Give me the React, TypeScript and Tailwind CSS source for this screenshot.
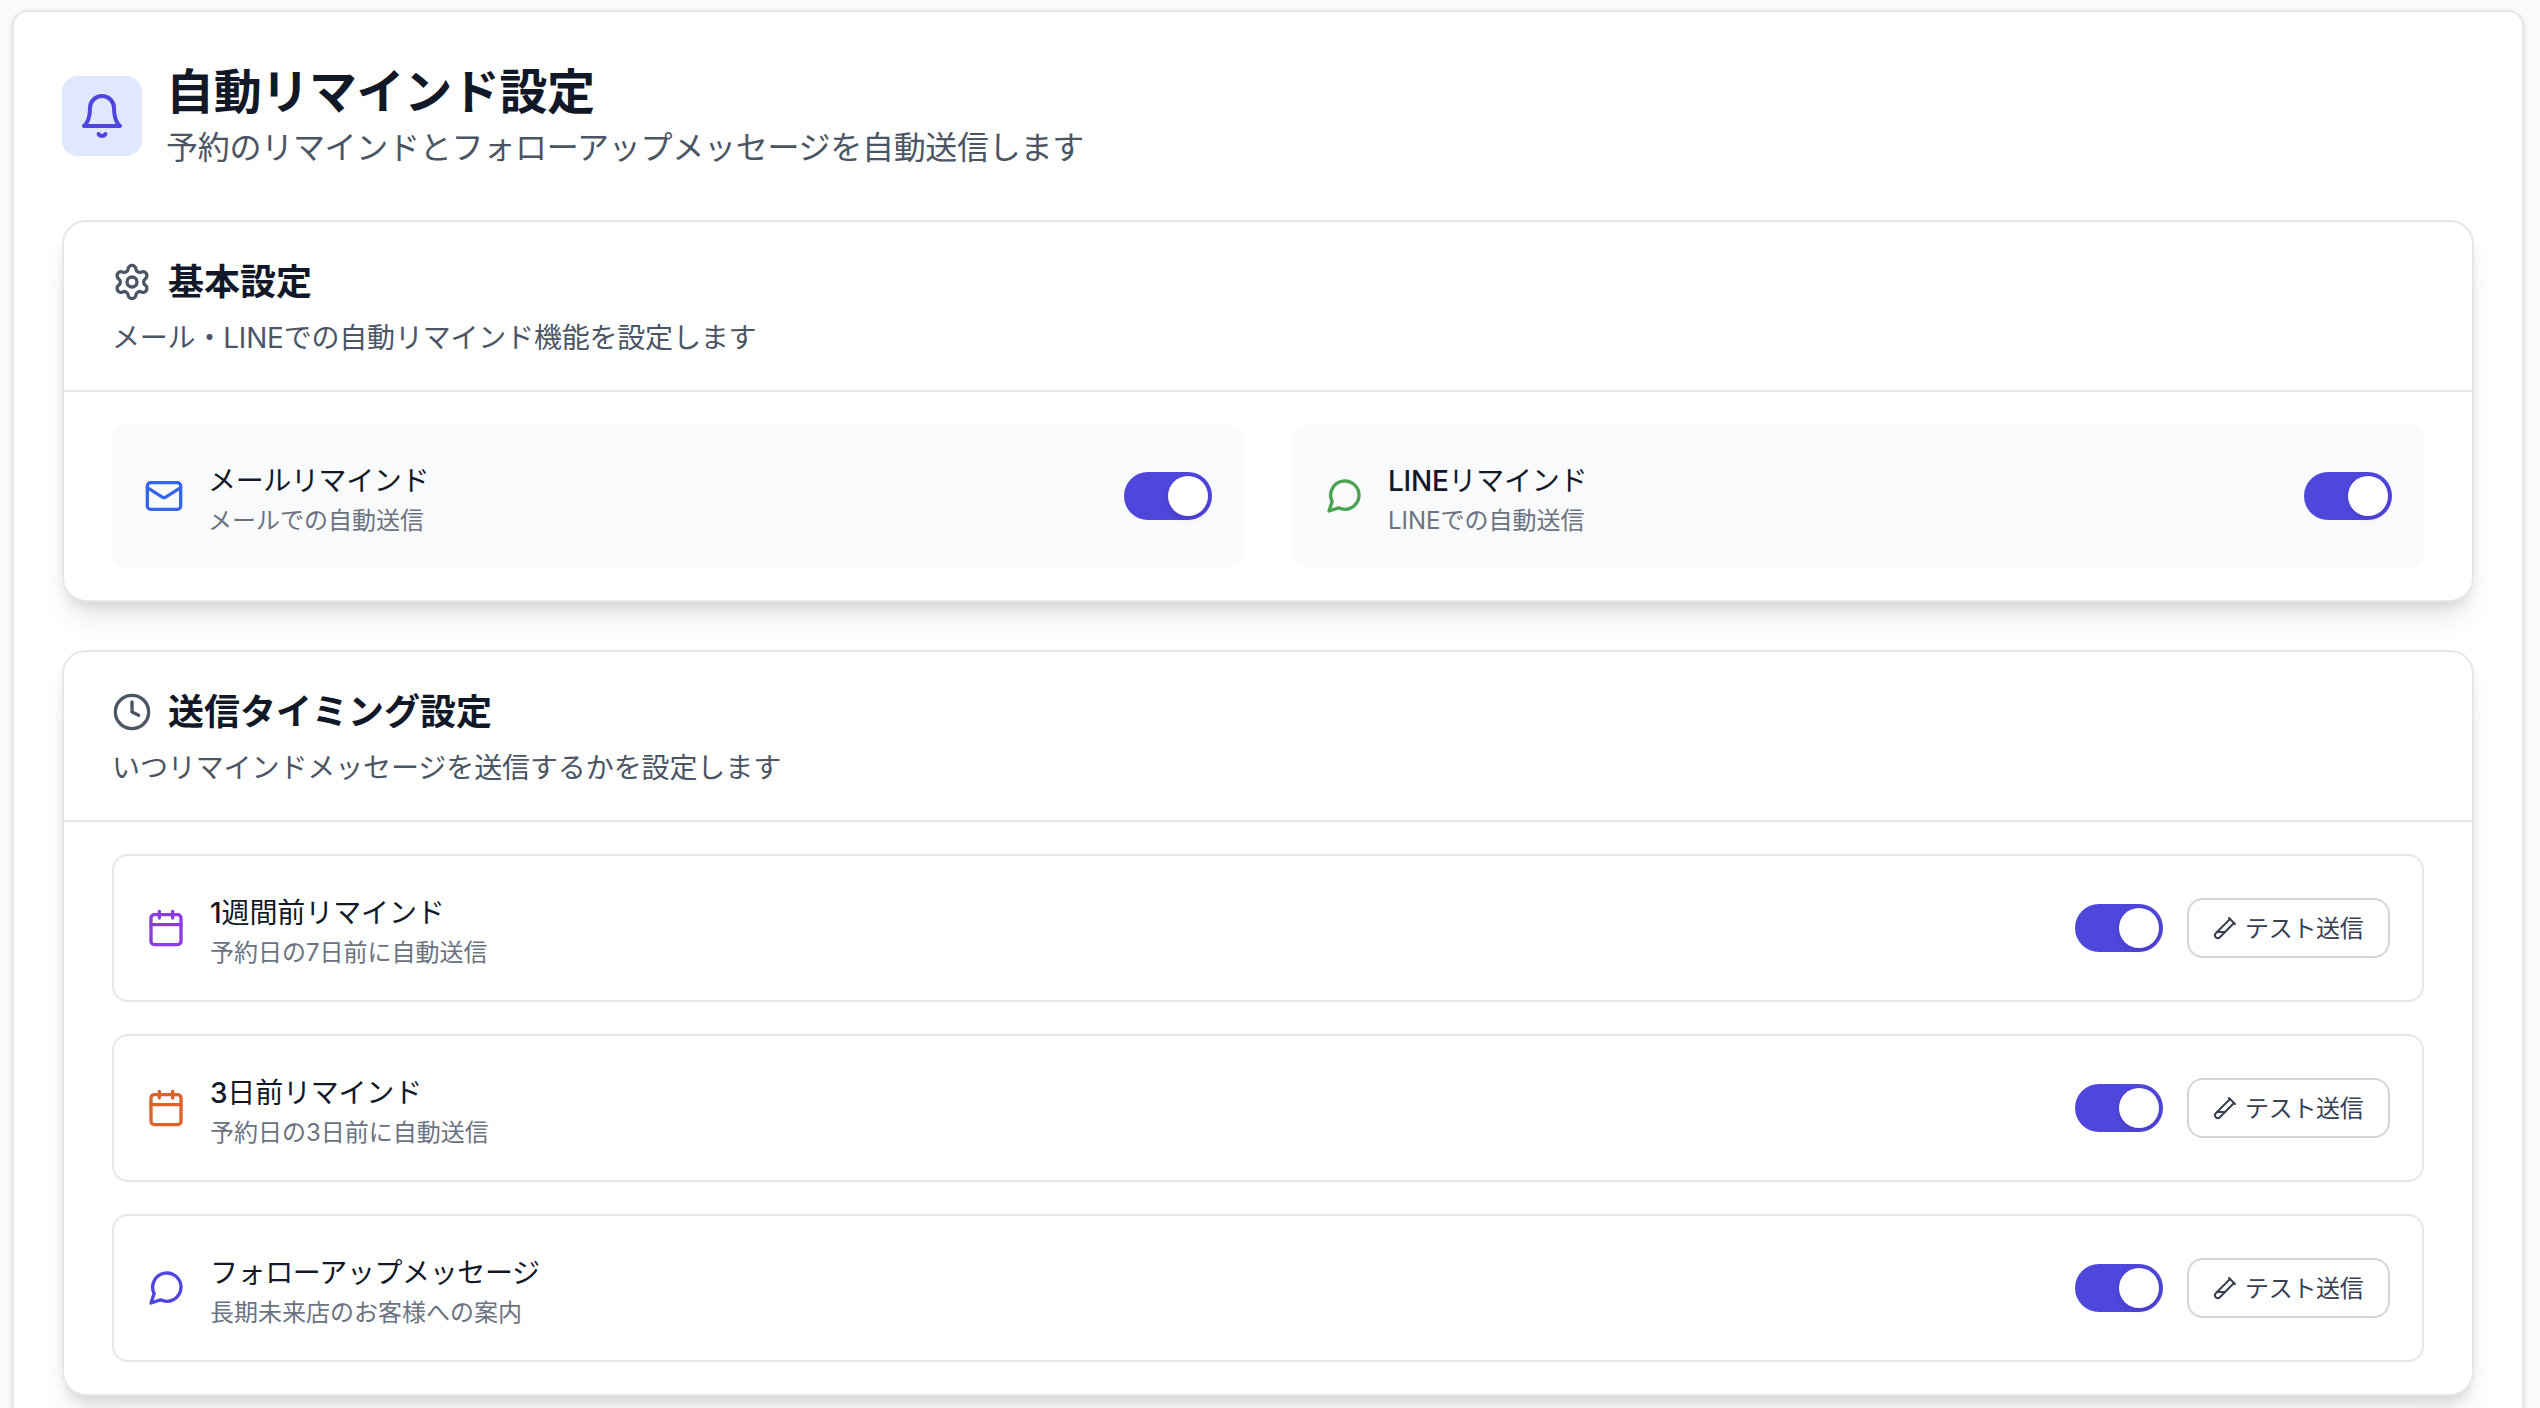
import React, { type ReactNode } from 'react';
import { Clock, Settings, TestTubeDiagonal } from 'lucide-react';

type IconProps = { className?: string; children: ReactNode };

function Stroke({ className, children }: IconProps) {
  return (
    <svg
      viewBox="0 0 24 24"
      fill="none"
      stroke="currentColor"
      strokeWidth="2"
      strokeLinecap="round"
      strokeLinejoin="round"
      className={className}
    >
      {children}
    </svg>
  );
}

function Bell({ className }: { className?: string }) {
  return (
    <Stroke className={className}>
      <path d="M6 8a6 6 0 0 1 12 0c0 7 3 9 3 9H3s3-2 3-9" />
      <path d="M10.3 21a1.94 1.94 0 0 0 3.4 0" />
    </Stroke>
  );
}

function Mail({ className }: { className?: string }) {
  return (
    <Stroke className={className}>
      <rect width="20" height="16" x="2" y="4" rx="2" />
      <path d="m22 7-8.97 5.7a1.94 1.94 0 0 1-2.06 0L2 7" />
    </Stroke>
  );
}

function Message({ className }: { className?: string }) {
  return (
    <Stroke className={className}>
      <path d="m3 21 1.9-5.7a8.5 8.5 0 1 1 3.8 3.8z" />
    </Stroke>
  );
}

function Calendar({ className }: { className?: string }) {
  return (
    <Stroke className={className}>
      <rect width="18" height="18" x="3" y="4" rx="2" />
      <path d="M16 2v4M8 2v4M3 10h18" />
    </Stroke>
  );
}

function Toggle() {
  return (
    <button
      type="button"
      role="switch"
      aria-checked="true"
      className="flex h-12 w-22 shrink-0 items-center justify-end rounded-full bg-[#4f46dc] p-1"
    >
      <span className="size-10 rounded-full bg-white shadow-[0_2px_6px_rgba(0,0,0,0.12)]" />
    </button>
  );
}

function Label({ title, note, tracking }: { title: ReactNode; note: string; tracking: string }) {
  return (
    <div className="flex-1 translate-y-px">
      <h3 className={`text-[28px] leading-12 text-[#111827] ${tracking}`}>{title}</h3>
      <p className="text-2xl leading-8 text-[#6b7280]">{note}</p>
    </div>
  );
}

type SectionProps = { icon: ReactNode; title: string; note: string; tracking: string; children: ReactNode };

function Section({ icon, title, note, tracking, children }: SectionProps) {
  return (
    <section className="rounded-3xl border-2 border-[#e5e7eb] bg-white shadow-[0_20px_30px_-6px_rgba(0,0,0,0.1),0_8px_12px_-4px_rgba(0,0,0,0.1)]">
      <header className="border-b-2 border-[#e5e7eb] px-12 py-8">
        <div className="flex items-center gap-4">
          {icon}
          <h2 className="text-4xl leading-14 font-bold text-[#111827]">{title}</h2>
        </div>
        <p className={`mt-2 text-[28px] leading-10 text-[#4b5563] ${tracking}`}>{note}</p>
      </header>
      <div className="px-12 py-8">{children}</div>
    </section>
  );
}

type ItemProps = { icon: ReactNode; title: ReactNode; note: string; tracking: string };

function Channel({ icon, title, note, tracking }: ItemProps) {
  return (
    <div className="flex items-center gap-6 rounded-2xl bg-[#f9fafb] p-8">
      {icon}
      <Label title={title} note={note} tracking={tracking} />
      <Toggle />
    </div>
  );
}

function Timing({ icon, title, note, tracking }: ItemProps) {
  return (
    <div className="flex items-center gap-6 rounded-2xl border-2 border-[#e5e7eb] p-8">
      {icon}
      <Label title={title} note={note} tracking={tracking} />
      <Toggle />
      <button
        type="button"
        className="flex h-15 w-[203px] items-center gap-2 rounded-2xl border-2 border-[#d1d5db] bg-white pl-6 text-2xl tracking-[-0.3px] whitespace-nowrap text-[#374151]"
      >
        <TestTubeDiagonal className="size-6 shrink-0" />
        <span className="translate-y-px">テスト送信</span>
      </button>
    </div>
  );
}

export default function App() {
  return (
    <div
      lang="ja"
      className="h-[1408px] overflow-hidden bg-[#f9fafb] pt-2.5 pr-4 pl-3 font-['Inter','Noto_Sans_CJK_JP',sans-serif]"
    >
      <main className="h-[1600px] rounded-2xl border-2 border-[#e5e7eb] bg-white p-12 shadow-[0_2px_6px_rgba(0,0,0,0.1),0_2px_4px_-2px_rgba(0,0,0,0.1)]">
        <header className="mb-12 flex items-center gap-6">
          <div className="rounded-2xl bg-[#e0e7ff] p-4 text-[#4f46e0]">
            <Bell className="size-12" />
          </div>
          <div>
            <h1 className="text-5xl leading-16 font-bold tracking-[-0.36px] text-[#111827]">自動リマインド設定</h1>
            <p className="text-[32px] leading-12 tracking-[-0.28px] text-[#4b5563]">
              予約のリマインドとフォローアップメッセージを自動送信します
            </p>
          </div>
        </header>

        <div className="flex flex-col gap-12">
          <Section
            icon={<Settings className="size-10 text-[#4b5563]" />}
            title="基本設定"
            note="メール・LINEでの自動リマインド機能を設定します"
            tracking="tracking-[-0.2px]"
          >
            <div className="grid grid-cols-2 gap-12">
              <Channel
                icon={<Mail className="size-10 text-[#3565ea]" />}
                title="メールリマインド"
                note="メールでの自動送信"
                tracking="tracking-[-0.36px]"
              />
              <Channel
                icon={<Message className="size-10 text-[#4aa350]" />}
                title={<><span className="font-medium">LINE</span>リマインド</>}
                note="LINEでの自動送信"
                tracking="tracking-[-0.25px]"
              />
            </div>
          </Section>

          <Section
            icon={<Clock className="size-10 text-[#4b5563]" />}
            title="送信タイミング設定"
            note="いつリマインドメッセージを送信するかを設定します"
            tracking="tracking-[-0.1px]"
          >
            <div className="flex flex-col gap-8">
              <Timing
                icon={<Calendar className="size-10 text-[#8b3be2]" />}
                title={<><span className="font-medium">1</span>週間前リマインド</>}
                note="予約日の7日前に自動送信"
                tracking="tracking-[-0.1px]"
              />
              <Timing
                icon={<Calendar className="size-10 text-[#dc6228]" />}
                title={<><span className="font-medium">3</span>日前リマインド</>}
                note="予約日の3日前に自動送信"
                tracking="tracking-[-0.2px]"
              />
              <Timing
                icon={<Message className="size-10 text-[#4f46e0]" />}
                title="フォローアップメッセージ"
                note="長期未来店のお客様への案内"
                tracking="tracking-[-0.4px]"
              />
            </div>
          </Section>
        </div>
      </main>
    </div>
  );
}
